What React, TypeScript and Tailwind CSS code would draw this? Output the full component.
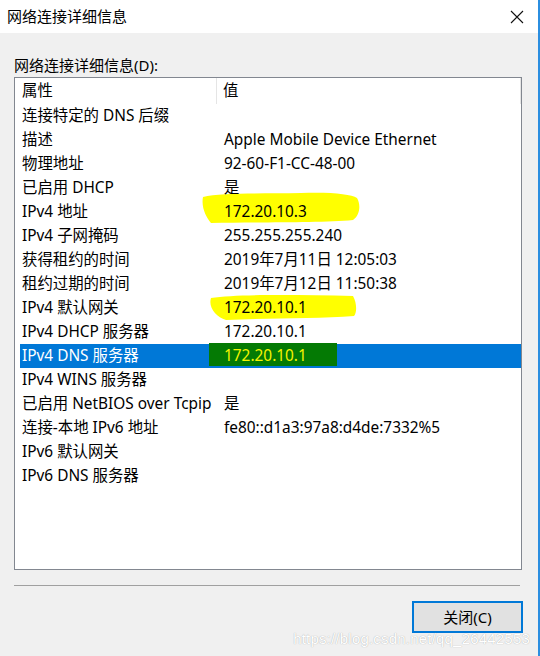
const rows: [string, string][] = [
  ["连接特定的 DNS 后缀", ""],
  ["描述", "Apple Mobile Device Ethernet"],
  ["物理地址", "92-60-F1-CC-48-00"],
  ["已启用 DHCP", "是"],
  ["IPv4 地址", "172.20.10.3"],
  ["IPv4 子网掩码", "255.255.255.240"],
  ["获得租约的时间", "2019年7月11日 12:05:03"],
  ["租约过期的时间", "2019年7月12日 11:50:38"],
  ["IPv4 默认网关", "172.20.10.1"],
  ["IPv4 DHCP 服务器", "172.20.10.1"],
  ["IPv4 DNS 服务器", "172.20.10.1"],
  ["IPv4 WINS 服务器", ""],
  ["已启用 NetBIOS over Tcpip", "是"],
  ["连接-本地 IPv6 地址", "fe80::d1a3:97a8:d4de:7332%5"],
  ["IPv6 默认网关", ""],
  ["IPv6 DNS 服务器", ""],
];

const font = { fontFamily: '"Noto Sans", "Noto Sans CJK SC", sans-serif' };

function Marker({ i }: { i: number }) {
  if (i === 4) {
    return (
      <svg className="absolute left-[181px] top-[-11px] z-0" width="160" height="36" viewBox="0 0 160 36">
        <path
          d="M2 8 C20 3 60 5 100 4 C130 3 150 5 156 9 C160 16 159 26 152 31 C120 34 60 33 10 34 C5 28 0 18 2 8 Z"
          fill="#ffff00"
        />
      </svg>
    );
  }
  if (i === 8) {
    return (
      <svg className="absolute left-[188px] top-[-3px] z-0" width="150" height="28" viewBox="0 0 150 28">
        <path
          d="M3 5 C30 1 90 2 145 3 C149 10 149 20 146 23 C110 26 60 25 18 27 C8 24 0 14 3 5 Z"
          fill="#ffff00"
        />
      </svg>
    );
  }
  if (i === 10) {
    return <span className="absolute left-[189px] top-[-1px] z-0 h-[23px] w-[128px] bg-[#047a04]" />;
  }
  return null;
}

export default function App() {
  return (
    <div className="relative flex h-[656px] w-[540px] flex-col overflow-hidden bg-[#f0f0f0] text-[15px] text-black" style={font}>
      <div className="flex h-[33px] items-center justify-between bg-white pl-[7px] pr-[16px]">
        <span className="leading-none">网络连接详细信息</span>
        <svg width="14" height="14" viewBox="0 0 14 14">
          <path d="M1 1 L13 13 M13 1 L1 13" stroke="#111" strokeWidth="1.1" />
        </svg>
      </div>

      <div className="flex flex-1 flex-col px-[14px]">
        <div className="mt-[20px] h-[24px] leading-[24px]">网络连接详细信息(D):</div>

        <div className="flex h-[493px] w-[508px] flex-col border border-[#828790] bg-white text-[15.4px]">
          <div className="flex h-[26px] items-center">
            <div className="flex h-full w-[202px] items-center border-r border-[#e5e5e5] pl-[7px]">属性</div>
            <div className="flex h-full flex-1 items-center border-r border-[#e5e5e5] pl-[6px]">值</div>
          </div>
          {rows.map(([k, v], i) => {
            const sel = i === 10;
            return (
              <div
                key={i}
                className={`relative ml-[5px] flex h-[24px] items-center ${sel ? "bg-[#0078d7] text-white" : ""}`}
              >
                <span className="w-[204px] shrink-0 whitespace-nowrap pl-[2px]">{k}</span>
                <Marker i={i} />
                <span className={`relative z-10 whitespace-nowrap ${sel ? "text-[#f4f400]" : ""}`}>{v}</span>
              </div>
            );
          })}
        </div>

        <div className="mt-[15px] h-px w-[506px] bg-[#a0a0a0]" />

        <div className="mt-[15px] flex w-[509px] justify-end">
          <button className="h-[32px] w-[111px] border-2 border-[#0078d7] bg-[#e1e1e1] text-[15px]">关闭(C)</button>
        </div>
      </div>

      <div className="absolute right-0 top-0 h-full w-[2px] bg-[#2b8ee0]" />
      <div
        className="absolute right-[10px] top-[628px] whitespace-nowrap text-[15px] tracking-[0.2px] text-white [text-shadow:0_0_1px_#9a9a9a]"
        style={{ fontFamily: '"Liberation Sans", Arial, sans-serif' }}
      >
        https://blog.csdn.net/qq_26442553
      </div>
    </div>
  );
}
